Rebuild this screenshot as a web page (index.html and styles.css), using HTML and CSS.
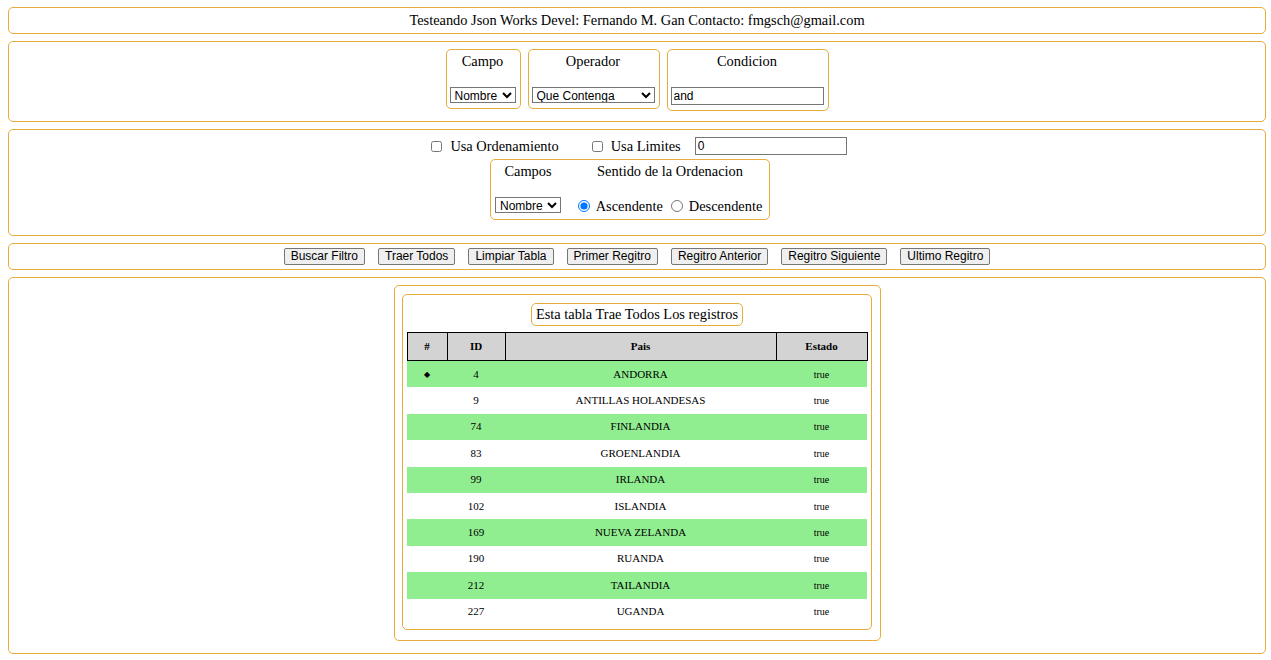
FILE: index.html
```html
<!DOCTYPE html>
<html lang="es">
<head>
<meta charset="utf-8">
<title>Testeando Json Works</title>
<link rel="stylesheet" href="styles.css">
</head>
<body>
<div class="box box-title">Testeando Json Works Devel: Fernando M. Gan Contacto: fmgsch@gmail.com</div>

<div class="box box-filters">
  <div class="field">
    <span class="field-label">Campo</span>
    <select class="ctl sel-campo"><option>Nombre</option></select>
  </div>
  <div class="field">
    <span class="field-label">Operador</span>
    <select class="ctl sel-operador"><option>Que Contenga</option></select>
  </div>
  <div class="field field-tall">
    <span class="field-label">Condicion</span>
    <input class="ctl txt-condicion" type="text" value="and">
  </div>
</div>

<div class="box box-order">
  <div class="order-row">
    <input class="chk" type="checkbox"><span class="chk-label chk-label-wide">Usa Ordenamiento</span>
    <input class="chk" type="checkbox"><span class="chk-label">Usa Limites</span>
    <input class="ctl txt-limite" type="text" value="0">
  </div>
  <div class="order-wrap">
    <div class="order-box">
      <span class="order-head">Campos</span>
      <span class="order-head">Sentido de la Ordenacion</span>
      <select class="ctl sel-campos"><option>Nombre</option></select>
      <span class="radios">
        <input class="rad" type="radio" name="dir" checked><span class="rad-label rad-label-first">Ascendente</span>
        <input class="rad" type="radio" name="dir"><span class="rad-label">Descendente</span>
      </span>
    </div>
  </div>
</div>

<div class="box box-buttons">
  <button class="btn">Buscar Filtro</button>
  <button class="btn">Traer Todos</button>
  <button class="btn">Limpiar Tabla</button>
  <button class="btn">Primer Regitro</button>
  <button class="btn">Regitro Anterior</button>
  <button class="btn">Regitro Siguiente</button>
  <button class="btn">Ultimo Regitro</button>
</div>

<div class="box box-results">
  <div class="panel-outer">
    <div class="panel-inner">
      <div class="caption-wrap"><span class="caption">Esta tabla Trae Todos Los registros</span></div>
      <table class="grid">
        <colgroup>
          <col class="c-hash"><col class="c-id"><col class="c-pais"><col class="c-estado">
        </colgroup>
        <thead>
          <tr><th>#</th><th>ID</th><th>Pais</th><th>Estado</th></tr>
        </thead>
        <tbody>
          <tr class="odd"><td class="mark">&#9670;</td><td>4</td><td>ANDORRA</td><td class="estado">true</td></tr>
          <tr><td></td><td>9</td><td>ANTILLAS HOLANDESAS</td><td class="estado">true</td></tr>
          <tr class="odd"><td></td><td>74</td><td>FINLANDIA</td><td class="estado">true</td></tr>
          <tr><td></td><td>83</td><td>GROENLANDIA</td><td class="estado">true</td></tr>
          <tr class="odd"><td></td><td>99</td><td>IRLANDA</td><td class="estado">true</td></tr>
          <tr><td></td><td>102</td><td>ISLANDIA</td><td class="estado">true</td></tr>
          <tr class="odd"><td></td><td>169</td><td>NUEVA ZELANDA</td><td class="estado">true</td></tr>
          <tr><td></td><td>190</td><td>RUANDA</td><td class="estado">true</td></tr>
          <tr class="odd"><td></td><td>212</td><td>TAILANDIA</td><td class="estado">true</td></tr>
          <tr><td></td><td>227</td><td>UGANDA</td><td class="estado">true</td></tr>
        </tbody>
      </table>
    </div>
  </div>
</div>
</body>
</html>
```

FILE: styles.css
```css
* { box-sizing: content-box; }

body {
  margin: 7px 5px 7px 8px;
  font-family: "Liberation Serif", "Times New Roman", serif;
  font-size: 14.4px;
  line-height: 17px;
  color: #000;
  background: #fff;
}

.box {
  border: 1px solid #e8ac3a;
  border-radius: 5px;
  margin-bottom: 7px;
}

.box-title {
  text-align: center;
  padding: 4px 0;
}

/* filters */
.box-filters {
  display: flex;
  justify-content: center;
  align-items: flex-start;
  gap: 7px;
  padding: 7px 0 10px;
}

.field {
  display: flex;
  flex-direction: column;
  align-items: center;
  border: 1px solid #e8ac3a;
  border-radius: 5px;
  padding: 3px 4px 5px 3px;
}

.field-label {
  height: 17px;
  margin-bottom: 17px;
}

.ctl {
  font-family: "Liberation Sans", Arial, sans-serif;
  font-size: 12px;
  color: #000;
  margin: 0;
}

select.ctl {
  box-sizing: border-box;
  height: 16px;
  padding: 0;
  border: 1px solid #767676;
  border-radius: 0;
  background: #fff;
}

input.ctl {
  border: 1px solid #767676;
  padding: 0 2px;
  background: #fff;
  box-sizing: border-box;
}

.sel-campo { width: 66px; }
.sel-operador { width: 123px; }
.txt-condicion { width: 153px; height: 18px; }

/* order */
.box-order {
  padding: 7px 0 15px;
}

.order-row {
  display: flex;
  justify-content: center;
  align-items: center;
  height: 18px;
  padding-left: 4px;
}

.chk {
  width: 11px;
  height: 11px;
  margin: 0 8px 0 0;
}

.chk-label { margin-right: 14px; }
.chk-label.chk-label-wide { margin-right: 33px; }

.txt-limite { width: 152px; height: 18px; }

.order-wrap {
  display: flex;
  justify-content: center;
  padding-right: 14px;
  margin-top: 4px;
}

.order-box {
  display: grid;
  grid-template-columns: 70px 192px;
  column-gap: 11px;
  row-gap: 13px;
  justify-items: center;
  align-items: center;
  border: 1px solid #e8ac3a;
  border-radius: 5px;
  padding: 3px 3px 4px 2px;
}

.order-head { height: 17px; }

.sel-campos { width: 66px; margin-top: 1px; }

.radios {
  display: flex;
  align-items: center;
  box-sizing: border-box;
  height: 22px;
  padding-top: 4px;
}

.rad {
  width: 12px;
  height: 12px;
  margin: 0 6px 0 0;
}

.rad-label-first { margin-right: 8px; }

/* buttons */
.box-buttons {
  display: flex;
  justify-content: center;
  gap: 13px;
  padding: 4px 0;
}

.btn {
  font-family: "Liberation Sans", Arial, sans-serif;
  font-size: 12px;
  line-height: 13px;
  height: 17px;
  box-sizing: border-box;
  padding: 1px 6px;
  margin: 0;
  color: #000;
  background: #efefef;
  border: 1px solid #767676;
  border-radius: 2px;
}

/* results */
.box-results {
  display: flex;
  justify-content: center;
  align-items: flex-start;
  padding: 7px 0 12px;
}

.panel-outer {
  border: 1px solid #e8ac3a;
  border-radius: 5px;
  padding: 8px 8px 10px 7px;
}

.panel-inner {
  border: 1px solid #e8ac3a;
  border-radius: 5px;
  padding: 8px 3px 4px 4px;
}

.caption-wrap {
  text-align: center;
  margin-bottom: 6px;
  height: 23px;
}

.caption {
  display: inline-block;
  border: 1px solid #e8ac3a;
  border-radius: 5px;
  padding: 2px 4px;
}

.grid {
  width: 460px;
  table-layout: fixed;
  border-collapse: collapse;
  font-size: 11px;
  line-height: 13px;
}

.c-hash { width: 40px; }
.c-id { width: 58px; }
.c-pais { width: 271px; }
.c-estado { width: 91px; }

.grid th {
  background: #d3d3d3;
  border: 1px solid #000;
  height: 27px;
  padding: 0;
  font-weight: bold;
  text-align: center;
}

.grid td {
  height: 26.4px;
  padding: 0;
  text-align: center;
}

.grid tr.odd td { background: #90ee90; }

.grid td.mark { font-size: 8px; }
.grid td.estado { font-size: 10px; }
```
